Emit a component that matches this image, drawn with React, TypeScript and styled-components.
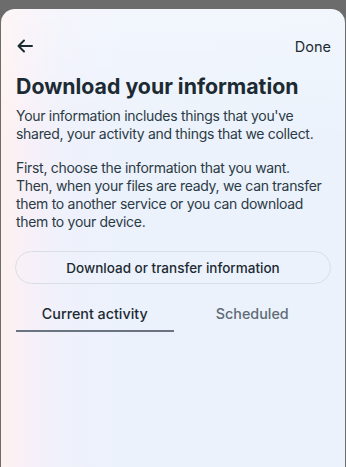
import React, { useState } from "react";
import styled, { createGlobalStyle } from "styled-components";

const Global = createGlobalStyle`
  html, body { margin: 0; padding: 0; background: #6c6c6c; }
  body { font-family: Inter, "Noto Sans", sans-serif; }
  * { box-sizing: border-box; }
`;

const Screen = styled.div`
  width: 346px;
  height: 467px;
  padding: 9px 1px 0 1px;
  background: #6c6c6c;
  overflow: hidden;
`;

const Sheet = styled.div`
  height: 100%;
  border-radius: 14px 14px 0 0;
  background:
    linear-gradient(180deg, rgba(255,255,255,0.35) 0%, rgba(255,255,255,0) 30%),
    linear-gradient(90deg, #fef2f0 0%, #f7f0f8 8%, #eff1fb 18%, #ecf2fc 35%, #ebf2fc 100%);
  padding: 0 14px;
  display: flex;
  flex-direction: column;
`;

const TopBar = styled.div`
  height: 74px;
  display: flex;
  align-items: center;
  justify-content: space-between;
  padding-left: 1px;
`;

const IconButton = styled.button`
  border: 0;
  background: none;
  padding: 0;
  width: 18px;
  height: 18px;
  display: flex;
  align-items: center;
  justify-content: center;
  color: #1c2b33;
`;

const DoneButton = styled.button`
  border: 0;
  background: none;
  padding: 0;
  font-family: inherit;
  font-size: 14.5px;
  color: #1c2b33;
`;

const Title = styled.h1`
  margin: -10px 0 0 1px;
  font-size: 21.3px;
  font-weight: 700;
  color: #1c2b33;
  line-height: 26px;
`;

const Paragraph = styled.p<{ $gap?: number }>`
  margin: ${(p) => p.$gap ?? 0}px 0 0 1px;
  padding-right: 6px;
  font-size: 14px;
  line-height: 18px;
  letter-spacing: -0.3px;
  color: #2b3b45;
`;

const PillButton = styled.button`
  margin-top: 20px;
  height: 33px;
  width: 100%;
  border-radius: 17px;
  border: 1px solid #d9dee6;
  background: transparent;
  font-family: inherit;
  font-size: 13.5px;
  font-weight: 500;
  color: #1c2b33;
`;

const Tabs = styled.div`
  margin-top: 14px;
  display: grid;
  grid-template-columns: 1fr 1fr;
  margin-left: 1px;
`;

const Tab = styled.button<{ $active?: boolean }>`
  border: 0;
  background: none;
  padding: 0;
  height: 34px;
  font-family: inherit;
  font-size: 14.3px;
  font-weight: 500;
  color: ${(p) => (p.$active ? "#1c2b33" : "#5f6b76")};
  border-bottom: 2px solid ${(p) => (p.$active ? "#6b7582" : "transparent")};
  padding-bottom: 2px;
`;

export default function App() {
  const [tab, setTab] = useState(0);
  return (
    <>
      <Global />
      <Screen>
        <Sheet>
          <TopBar>
            <IconButton aria-label="Back">
              <svg width="16" height="14" viewBox="0 0 16 14" fill="none" stroke="currentColor" strokeWidth="2" strokeLinecap="round" strokeLinejoin="round">
                <path d="M15 7H1.5M7 1.5L1.5 7L7 12.5" />
              </svg>
            </IconButton>
            <DoneButton>Done</DoneButton>
          </TopBar>
          <Title>Download your information</Title>
          <Paragraph $gap={8}>
            Your information includes things that you've shared, your activity and things that we collect.
          </Paragraph>
          <Paragraph $gap={16}>
            First, choose the information that you want. Then, when your files are ready, we can transfer them to another service or you can download them to your device.
          </Paragraph>
          <PillButton>Download or transfer information</PillButton>
          <Tabs>
            <Tab $active={tab === 0} onClick={() => setTab(0)}>Current activity</Tab>
            <Tab $active={tab === 1} onClick={() => setTab(1)}>Scheduled</Tab>
          </Tabs>
        </Sheet>
      </Screen>
    </>
  );
}
